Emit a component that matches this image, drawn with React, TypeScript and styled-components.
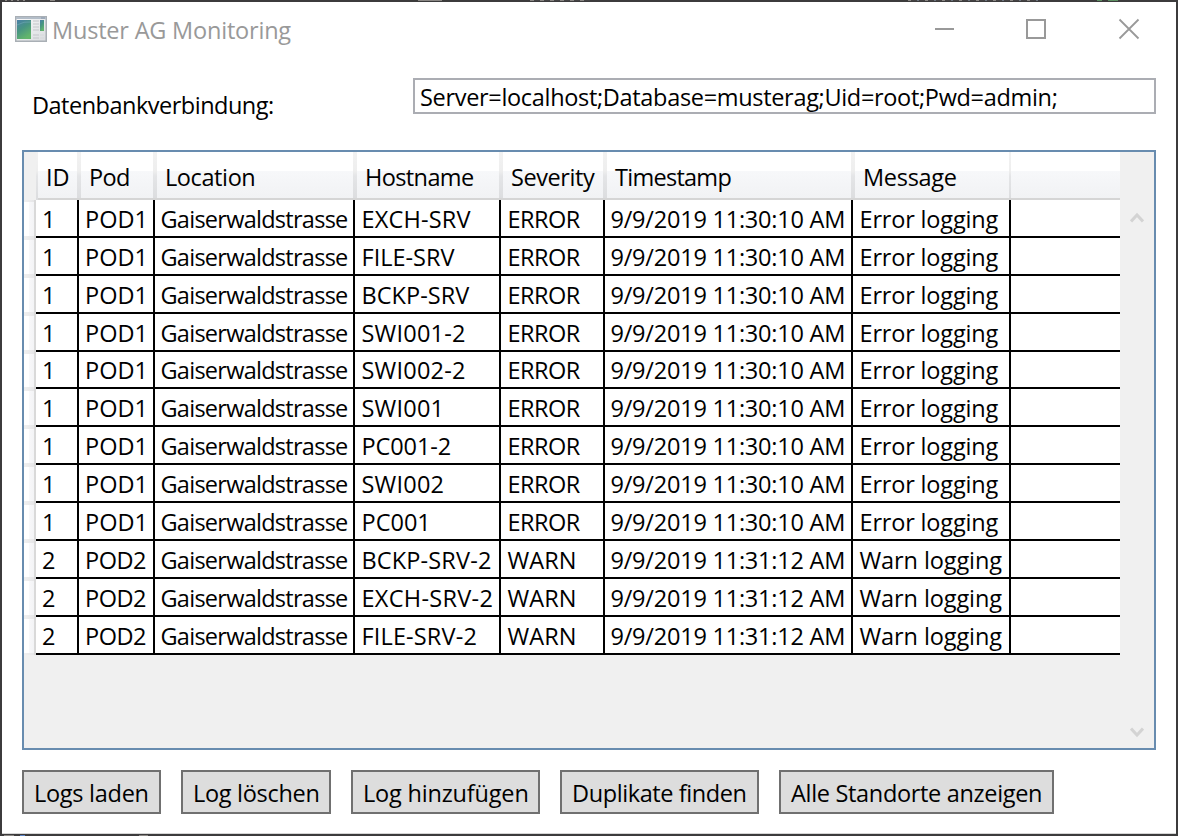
import React from "react";
import styled, { createGlobalStyle } from "styled-components";

const GlobalStyle = createGlobalStyle`
  * { box-sizing: border-box; }
  body {
    margin: 0;
    background: #3c3b3c;
    overflow: hidden;
    font-family: "Open Sans", "Noto Sans", sans-serif;
    font-size: 23.5px;
    color: #000;
  }
`;

const Desktop = styled.div`
  height: 836px;
  padding: 2px;
  background:
    linear-gradient(#5d8f62, #5d8f62) 1097px 0 / 5px 1px no-repeat,
    linear-gradient(#5d8f62, #5d8f62) 1108px 0 / 10px 1px no-repeat,
    repeating-linear-gradient(90deg, #8a8784 0 3px, #454344 3px 9px, #6d7580 9px 11px, #454344 11px 17px) 908px 0 / 130px 1px no-repeat,
    repeating-linear-gradient(90deg, #8a8784 0 4px, #454344 4px 10px) 530px 0 / 60px 1px no-repeat,
    linear-gradient(#8a8784, #8a8784) 418px 0 / 24px 1px no-repeat,
    linear-gradient(#8a8784, #8a8784) 50px 0 / 5px 1px no-repeat,
    repeating-linear-gradient(90deg, #8a8784 0 2px, #454344 2px 6px) 5px 0 / 20px 1px no-repeat,
    linear-gradient(#8a8784, #8a8784) 4px 835px / 10px 1px no-repeat,
    linear-gradient(#5b83c4, #5b83c4) 20px 835px / 5px 1px no-repeat,
    linear-gradient(#8a8784, #8a8784) 139px 835px / 9px 1px no-repeat,
    #3c3b3c;
`;

const Window = styled.main`
  height: 832px;
  display: flex;
  flex-direction: column;
  background: #fff;
  border-bottom: 1px solid #d5d5d5;
`;

const Text = styled.span<{ $spacing: number }>`
  letter-spacing: ${(p) => p.$spacing}px;
  white-space: pre;
`;

const TitleBar = styled.header`
  display: flex;
  height: 76px;
  padding-left: 13px;
  color: #999;
`;

const AppIcon = styled.svg`
  width: 32px;
  height: 26px;
  margin-top: 14px;
`;

const Title = styled.h1`
  margin: 11px 0 0 5px;
  font-size: inherit;
  font-weight: 400;
  line-height: 34px;
  flex: 1;
`;

const WindowControls = styled.div`
  display: flex;
  gap: 71px;
  padding: 16px 36px 0 0;

  svg { width: 22px; height: 22px; }
`;

const ConnectionRow = styled.label`
  display: flex;
  height: 36px;
  padding: 0 20px 0 30px;
`;

const ConnectionLabel = styled.span`
  width: 381px;
  padding-top: 10px;
  line-height: 34px;
`;

const ConnectionField = styled.span`
  flex: 1;
  border: 2px solid #abadb3;
  padding-left: 5px;
  line-height: 35px;
`;

const Grid = styled.section`
  display: flex;
  height: 600px;
  margin: 36px 20px 0;
  border: 2px solid #688caf;
  background: #f0f0f0;
`;

const Table = styled.div`
  width: 1096px;
`;

const columns = "12px 43px 76px 200px 146px 104px 248px 158px 109px";

const HeaderRow = styled.div`
  display: grid;
  grid-template-columns: ${columns};
  grid-template-rows: 48px;
`;

const Corner = styled.div`
  position: relative;
  background: #f0f0f0;

  &::after {
    content: "";
    position: absolute;
    top: 0;
    right: -2px;
    z-index: 1;
    width: 2px;
    height: 48px;
    background: linear-gradient(#f2f2f2, #eee 19px, #e4e5e7 24px, #dcdddf);
  }
`;

const HeaderCell = styled.div<{ $last?: boolean; $rule?: number }>`
  position: relative;
  padding-left: 10px;
  border-bottom: 2px solid #d5d5d5;
  line-height: 50px;
  background: linear-gradient(#fff 0 19px, #f7f8fa 19px, #f1f2f4 46px);

  &::after {
    content: "";
    display: ${(p) => (p.$last ? "none" : "block")};
    position: absolute;
    top: 0;
    right: ${(p) => (p.$rule === 2 ? 0 : -2)}px;
    z-index: 1;
    width: ${(p) => p.$rule ?? 4}px;
    height: 46px;
    background: linear-gradient(#f2f2f2, #eee 19px, #e4e5e7 24px, #dcdddf);
  }
`;

const Row = styled.div<{ $height: number }>`
  display: grid;
  grid-template-columns: ${columns};
  grid-template-rows: ${(p) => p.$height}px;
  line-height: ${(p) => (p.$height - 20) * 2}px;
`;

const RowHeader = styled.div`
  background:
    linear-gradient(#d9d9d9, #d9d9d9) right / 2px 100% no-repeat,
    linear-gradient(90deg, #f0f0f0, #e4e4e6) top / 100% 2px no-repeat,
    linear-gradient(90deg, #f0f0f0, #e4e4e6) bottom / 100% 2px no-repeat,
    linear-gradient(90deg, #fff 0 5px, #f8f8fa 5px, #f1f2f4);
`;

const Cell = styled.div<{ $pad?: number; $last?: boolean }>`
  padding: 1px 0 0 ${(p) => p.$pad ?? 6.5}px;
  background: #fff;
  border-right: ${(p) => (p.$last ? "0" : "2px solid #000")};
  border-bottom: 2px solid #000;
  overflow: hidden;
`;

const ScrollBar = styled.div`
  width: 34px;
  padding: 60px 10px 10px;
  display: flex;
  flex-direction: column;
  justify-content: space-between;

  svg { width: 14px; height: 12px; }
`;

const ButtonRow = styled.footer`
  display: flex;
  gap: 20px;
  padding: 20px 20px 0;
`;

const Button = styled.button<{ $width: number }>`
  width: ${(p) => p.$width}px;
  height: 44px;
  padding: 2px 0 0 10px;
  border: 2px solid #707070;
  background: #ddd;
  color: #000;
  font: inherit;
  line-height: 36px;
  text-align: left;
`;

/* Letter spacing per string, in px. */
const tracking: Record<string, number> = {
  "1": 0, "2": 0,
  POD1: 0, POD2: -0.5, Gaiserwaldstrasse: -0.73,
  "EXCH-SRV": 0.18, "FILE-SRV": 0, "BCKP-SRV": 0.05,
  "SWI001-2": 0.2, "SWI002-2": 0.2, SWI001: 0.2, SWI002: 0.2,
  "PC001-2": -0.1, PC001: 0,
  "BCKP-SRV-2": 0.15, "EXCH-SRV-2": 0.3, "FILE-SRV-2": 0.15,
  ERROR: -0.5, WARN: 0.1,
  "9/9/2019 11:30:10 AM": -0.22, "9/9/2019 11:31:12 AM": -0.22,
  "Error logging": -0.17, "Warn logging": -0.1,
};

const cellPadding = [6, 6, 5.5, 6.5, 6.5, 5.5, 6.5];

const headers: [string, number][] = [
  ["ID", 0], ["Pod", -0.64], ["Location", -0.4], ["Hostname", -0.61],
  ["Severity", -0.42], ["Timestamp", -0.73], ["Message", -0.3],
];

const errorHosts = ["EXCH-SRV", "FILE-SRV", "BCKP-SRV", "SWI001-2", "SWI002-2", "SWI001", "PC001-2", "SWI002", "PC001"];
const warnHosts = ["BCKP-SRV-2", "EXCH-SRV-2", "FILE-SRV-2"];

const rows = [
  ...errorHosts.map((h) => ["1", "POD1", "Gaiserwaldstrasse", h, "ERROR", "9/9/2019 11:30:10 AM", "Error logging"]),
  ...warnHosts.map((h) => ["2", "POD2", "Gaiserwaldstrasse", h, "WARN", "9/9/2019 11:31:12 AM", "Warn logging"]),
];

const buttons: [string, number, number][] = [
  ["Logs laden", 139, -0.27],
  ["Log löschen", 150, -0.3],
  ["Log hinzufügen", 189, -0.18],
  ["Duplikate finden", 199, -0.4],
  ["Alle Standorte anzeigen", 275, -0.32],
];

function ProgramIcon() {
  return (
    <AppIcon viewBox="0 0 32 26">
      <defs>
        <linearGradient id="pane" x1="0" y1="0" x2="0.5" y2="1">
          <stop offset="0" stopColor="#4a7fa8" />
          <stop offset="0.5" stopColor="#479482" />
          <stop offset="1" stopColor="#62b56c" />
        </linearGradient>
        <linearGradient id="frame" x1="0" y1="0" x2="1" y2="1">
          <stop offset="0" stopColor="#fafafa" />
          <stop offset="1" stopColor="#d9dcdf" />
        </linearGradient>
      </defs>
      <rect x="0.75" y="0.75" width="30.5" height="24.5" fill="url(#frame)" stroke="#a9afb5" strokeWidth="1.5" />
      <path d="M1 2H31" stroke="#b3bdc8" strokeWidth="2" />
      <path d="M26 2H30" stroke="#8696aa" strokeWidth="1" />
      <rect x="2" y="4" width="14" height="19" fill="url(#pane)" />
      <path d="M2 9Q9 5 16 6" stroke="#79aebd" strokeOpacity="0.5" fill="none" />
      <path d="M18 5H24M18 8H24M18 11H24M18 14H24M18 19H24M18 22H24" stroke="#c3c6c9" strokeWidth="1.2" />
      <rect x="25" y="4" width="4" height="11" fill="url(#pane)" />
      <path d="M25 19H29M25 22H29" stroke="#d5d8da" strokeWidth="1" />
    </AppIcon>
  );
}

export default function App() {
  return (
    <>
      <GlobalStyle />
      <Desktop>
        <Window>
          <TitleBar>
            <ProgramIcon />
            <Title><Text $spacing={-0.2}>Muster AG Monitoring</Text></Title>
            <WindowControls>
              <svg viewBox="0 0 22 22"><path d="M3 11H22" stroke="#999" strokeWidth="2" /></svg>
              <svg viewBox="0 0 22 22"><rect x="2" y="2" width="18" height="18" fill="none" stroke="#999" strokeWidth="2" /></svg>
              <svg viewBox="0 0 22 22"><path d="M1.5 1.5L20.5 20.5M20.5 1.5L1.5 20.5" stroke="#999" strokeWidth="1.8" /></svg>
            </WindowControls>
          </TitleBar>
          <ConnectionRow>
            <ConnectionLabel><Text $spacing={-0.5}>Datenbankverbindung:</Text></ConnectionLabel>
            <ConnectionField>
              <Text $spacing={-0.32}>Server=localhost;Database=musterag;Uid=root;Pwd=admin;</Text>
            </ConnectionField>
          </ConnectionRow>
          <Grid>
            <Table>
              <HeaderRow>
                <Corner />
                {headers.map(([name, spacing], i) => (
                  <HeaderCell key={name} $rule={i === 6 ? 2 : 4}>
                    <Text $spacing={spacing}>{name}</Text>
                  </HeaderCell>
                ))}
                <HeaderCell $last />
              </HeaderRow>
              {rows.map((row, r) => (
                <Row key={r} $height={r === 4 ? 37 : 38}>
                  <RowHeader />
                  {row.map((value, c) => (
                    <Cell key={c} $pad={cellPadding[c]}><Text $spacing={tracking[value]}>{value}</Text></Cell>
                  ))}
                  <Cell $last />
                </Row>
              ))}
            </Table>
            <ScrollBar>
              <svg viewBox="0 0 14 12"><path d="M1 9.5L7 3L13 9.5" fill="none" stroke="#d3d3d3" strokeWidth="3" /></svg>
              <svg viewBox="0 0 14 12"><path d="M1 2.5L7 9L13 2.5" fill="none" stroke="#d3d3d3" strokeWidth="3" /></svg>
            </ScrollBar>
          </Grid>
          <ButtonRow>
            {buttons.map(([label, width, spacing]) => (
              <Button key={label} $width={width}><Text $spacing={spacing}>{label}</Text></Button>
            ))}
          </ButtonRow>
        </Window>
      </Desktop>
    </>
  );
}
